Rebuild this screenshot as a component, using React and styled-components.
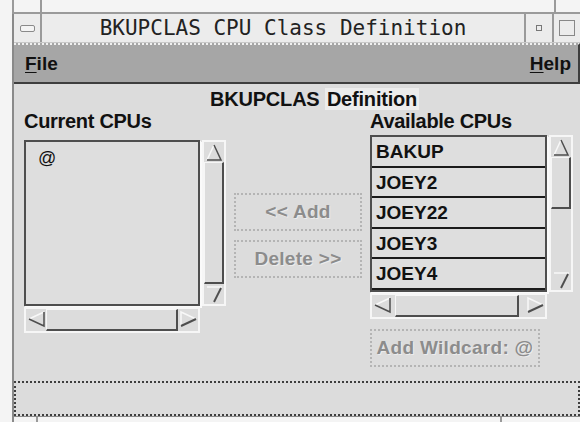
import React from 'react'
import styled, { createGlobalStyle } from 'styled-components'

const GlobalStyle = createGlobalStyle`
  html, body {
    margin: 0;
    padding: 0;
    background: #f4f4f4;
  }
`

const DARK = '#4e4e4e'
const FACE = '#dcdcdc'

const Screen = styled.div`
  width: 580px;
  height: 422px;
  overflow: hidden;
  background: #f4f4f4;
  font-family: 'Liberation Sans', Arial, sans-serif;
`

const TopStrip = styled.div`
  height: 12px;
  margin-left: 12px;
  border-left: 2px solid #9a9a9a;
  border-bottom: 2px solid #9a9a9a;
  display: flex;
`

const Tick = styled.div`
  width: ${p => p.$at}px;
  margin-right: ${p => p.$end || 0}px;
  border-right: 2px solid #9a9a9a;
`

const Window = styled.div`
  margin-left: 12px;
  border-left: 2px solid #8a8a8a;
  display: flex;
  flex-direction: column;
`

const TitleBar = styled.div`
  height: 28px;
  display: flex;
  background: #ececec;
  border-bottom: 1px solid #c8c8c8;
`

const TitleButton = styled.div`
  width: ${p => p.$w}px;
  display: flex;
  align-items: center;
  justify-content: center;
  border-right: ${p => (p.$edge ? '2px solid #9a9a9a' : 'none')};
  border-left: ${p => (p.$left ? '2px solid #9a9a9a' : 'none')};
`

const MinGlyph = styled.div`
  width: 13px;
  height: 5px;
  border: 1px solid #8a8a8a;
  border-radius: 2px;
  background: #f4f4f4;
`

const DotGlyph = styled.div`
  width: 4px;
  height: 4px;
  border: 1px solid #777;
`

const BoxGlyph = styled.div`
  width: 14px;
  height: 14px;
  border: 1px solid #888;
`

const TitleText = styled.div`
  flex: 1;
  text-align: center;
  font-family: 'DejaVu Sans Mono', 'Liberation Mono', monospace;
  font-size: 21px;
  line-height: 28px;
  color: #222;
`

const MenuBar = styled.div`
  height: 37px;
  background: #a6a6a6;
  border-top: 2px dotted #f0f0f0;
  border-bottom: 2px solid #3e3e3e;
  border-right: 2px solid #3e3e3e;
  display: flex;
  align-items: center;
  justify-content: space-between;
  padding: 0 7px 0 11px;
  font-size: 19px;
  font-weight: bold;
  color: #111;
`

const Mnemonic = styled.span`
  text-decoration: underline;
  text-underline-offset: 2px;
`

const Body = styled.div`
  height: 297px;
  background: ${FACE};
  padding: 4px 0 0 10px;
  box-sizing: border-box;
`

const Heading = styled.div`
  font-size: 20px;
  font-weight: bold;
  line-height: 22px;
  color: #111;
  padding-left: 186px;
  letter-spacing: -0.2px;
`

const Highlight = styled.span`
  background: #ececec;
  padding: 0 2px;
`

const Columns = styled.div`
  display: flex;
  align-items: flex-start;
`

const Column = styled.div`
  width: ${p => p.$w}px;
  margin-right: ${p => p.$gap || 0}px;
  display: flex;
  flex-direction: column;
`

const Label = styled.div`
  font-size: 20px;
  font-weight: bold;
  line-height: 22px;
  color: #111;
  letter-spacing: -0.3px;
  margin-bottom: ${p => p.$space}px;
`

const Scrolled = styled.div`
  display: grid;
  grid-template-columns: ${p => p.$w}px 24px;
  grid-template-rows: ${p => p.$h}px 26px;
  column-gap: 2px;
  row-gap: 1px;
`

const ListBox = styled.div`
  box-sizing: border-box;
  border: 2px solid ${DARK};
  box-shadow: 1px 1px 0 #fafafa, 2px 2px 0 #fafafa;
  background: #dedede;
  overflow: hidden;
`

const EmptyItem = styled.div`
  padding: 6px 0 0 12px;
  font-size: 18px;
  color: #111;
`

const Row = styled.div`
  height: 28.5px;
  border-bottom: 2px solid #1a1a1a;
  padding-left: 4px;
  font-size: 19px;
  font-weight: bold;
  line-height: 29px;
  color: #111;
`

const Trough = styled.div`
  box-sizing: border-box;
  background: ${FACE};
  border: 2px solid #f6f6f6;
  display: flex;
  flex-direction: ${p => (p.$horizontal ? 'row' : 'column')};
  align-items: stretch;
`

const Thumb = styled.div`
  box-sizing: border-box;
  flex: ${p => (p.$fill ? 1 : 'none')};
  height: ${p => (p.$horizontal ? 'auto' : `${p.$len}px`)};
  width: ${p => (p.$horizontal ? `${p.$len}px` : 'auto')};
  border-top: 1px solid #f6f6f6;
  border-left: 1px solid #f6f6f6;
  border-right: 2px solid ${DARK};
  border-bottom: 2px solid ${DARK};
  margin: ${p => p.$margin || '0'};
`

const Spacer = styled.div`
  flex: 1;
`

const ArrowBox = styled.svg`
  flex: none;
  display: block;
`

// Motif style arrow buttons: light edge facing the light, dark edge in shadow
function Arrow({ dir }) {
  const s = 20
  if (dir === 'up')
    return (
      <ArrowBox width={s} height={s}>
        <polyline points="3,18 10,3" stroke="#f8f8f8" strokeWidth="1.5" fill="none" />
        <polyline points="10,3 17,18 3,18" stroke={DARK} strokeWidth="1.5" fill="none" />
      </ArrowBox>
    )
  if (dir === 'down')
    return (
      <ArrowBox width={s} height={s}>
        <polyline points="3,3 17,3 10,18" stroke="#f8f8f8" strokeWidth="1.5" fill="none" />
        <polyline points="10,18 17,4" stroke={DARK} strokeWidth="2" fill="none" />
      </ArrowBox>
    )
  if (dir === 'left')
    return (
      <ArrowBox width={s} height={s}>
        <polyline points="18,3 3,10" stroke="#f8f8f8" strokeWidth="1.5" fill="none" />
        <polyline points="3,10 18,17 18,3" stroke={DARK} strokeWidth="1.5" fill="none" />
      </ArrowBox>
    )
  return (
    <ArrowBox width={s} height={s}>
      <polyline points="3,17 3,3 18,10" stroke="#f8f8f8" strokeWidth="1.5" fill="none" />
      <polyline points="18,10 3,17" stroke={DARK} strokeWidth="2" fill="none" />
    </ArrowBox>
  )
}

function VScroll({ thumb }) {
  return (
    <Trough>
      <Arrow dir="up" />
      {thumb ? <Thumb $len={thumb} /> : <Thumb $fill />}
      {thumb && <Spacer />}
      <Arrow dir="down" />
    </Trough>
  )
}

function HScroll({ thumb }) {
  return (
    <Trough $horizontal>
      <Arrow dir="left" />
      {thumb ? <Thumb $horizontal $len={thumb} $margin="0 0 0 3px" /> : <Thumb $horizontal $fill />}
      {thumb && <Spacer />}
      <Arrow dir="right" />
    </Trough>
  )
}

const Corner = styled.div``

const Buttons = styled.div`
  display: flex;
  flex-direction: column;
  gap: 9px;
  padding-top: ${p => p.$top}px;
`

const Disabled = styled.div`
  box-sizing: border-box;
  width: ${p => p.$w}px;
  height: 38px;
  border: 2px dotted #b4b4b4;
  display: flex;
  align-items: center;
  justify-content: center;
  font-size: 19px;
  font-weight: bold;
  letter-spacing: 0.3px;
  color: #8c8c8c;
  text-shadow: 1px 1px 0 #ececec;
`

const Wildcard = styled(Disabled)`
  margin-top: 10px;
`

const StatusBar = styled.div`
  height: 35px;
  background: ${FACE};
  border: 2px dotted #3e3e3e;
  box-sizing: border-box;
`

const BottomStrip = styled.div`
  height: 6px;
  margin-left: 12px;
  border-left: 2px solid #8a8a8a;
  border-top: 1px solid #8a8a8a;
  display: flex;
`

const cpus = ['BAKUP', 'JOEY2', 'JOEY22', 'JOEY3', 'JOEY4']

export default function App() {
  return (
    <Screen>
      <GlobalStyle />
      <TopStrip>
        <Tick $at={26} />
        <Spacer />
        <Tick $at={0} $end={24} />
      </TopStrip>
      <Window>
        <TitleBar>
          <TitleButton $w={26} $edge>
            <MinGlyph />
          </TitleButton>
          <TitleText>BKUPCLAS CPU Class Definition</TitleText>
          <TitleButton $w={26} $left>
            <DotGlyph />
          </TitleButton>
          <TitleButton $w={26} $left>
            <BoxGlyph />
          </TitleButton>
        </TitleBar>
        <MenuBar>
          <span>
            <Mnemonic>F</Mnemonic>ile
          </span>
          <span>
            <Mnemonic>H</Mnemonic>elp
          </span>
        </MenuBar>
        <Body>
          <Heading>
            BKUPCLAS <Highlight>Definition</Highlight>
          </Heading>
          <Columns>
            <Column $w={200} $gap={10}>
              <Label $space={8}>Current CPUs</Label>
              <Scrolled $w={176} $h={166}>
                <ListBox>
                  <EmptyItem>@</EmptyItem>
                </ListBox>
                <VScroll />
                <HScroll />
                <Corner />
              </Scrolled>
            </Column>
            <Column $w={128} $gap={8}>
              <Buttons $top={83}>
                <Disabled $w={128}>&lt;&lt; Add</Disabled>
                <Disabled $w={128}>Delete &gt;&gt;</Disabled>
              </Buttons>
            </Column>
            <Column $w={204}>
              <Label $space={3}>Available CPUs</Label>
              <Scrolled $w={177} $h={157}>
                <ListBox>
                  {cpus.map(c => (
                    <Row key={c}>{c}</Row>
                  ))}
                </ListBox>
                <VScroll thumb={52} />
                <HScroll thumb={124} />
                <Corner />
              </Scrolled>
              <Wildcard $w={170}>Add Wildcard: @</Wildcard>
            </Column>
          </Columns>
        </Body>
        <StatusBar />
      </Window>
      <BottomStrip>
        <Tick $at={22} />
        <Spacer />
        <Tick $at={0} $end={78} />
      </BottomStrip>
    </Screen>
  )
}
